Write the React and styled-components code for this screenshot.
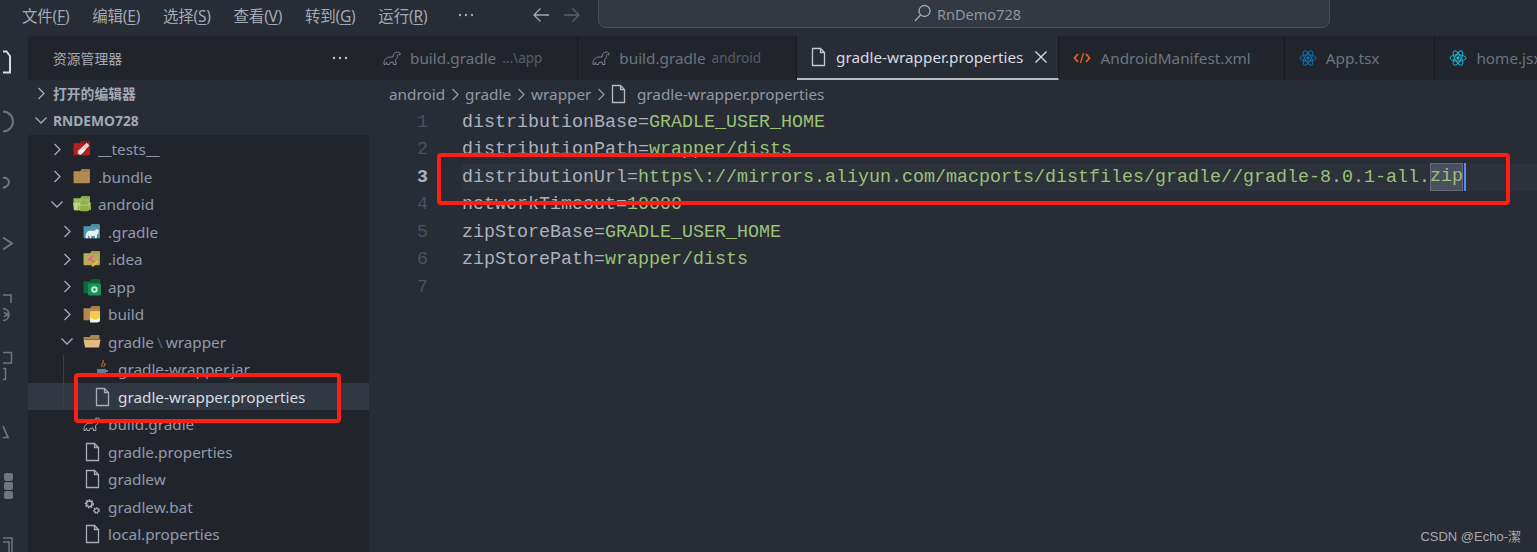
import React from "react";
import styled, { createGlobalStyle } from "styled-components";

const Global = createGlobalStyle`
  html, body { margin: 0; padding: 0; background: #282c34; }
  * { box-sizing: border-box; }
`;
const UI = `"Noto Sans", "Noto Sans CJK SC", sans-serif`;

const Page = styled.div`
  position: relative; width: 1537px; height: 552px; overflow: hidden;
  display: flex; flex-direction: column; background: #282c34;
  font-family: ${UI}; color: #9da5b4;
`;
const TitleBar = styled.header`
  height: 36px; flex: none; display: flex; align-items: flex-start; padding-left: 22px;
`;
const Menu = styled.nav`display: flex; gap: 22.8px; height: 30px; align-items: center; width: 409px; flex: none; color: #a3a9b5; white-space: nowrap;`;
const MenuItem = styled.span`
  font-size: 15.5px; letter-spacing: -0.2px;
  u { text-underline-offset: 2px; text-decoration-thickness: 1px; }
`;
const NavIcons = styled.div`display: flex; align-items: center; height: 30px; margin-left: 26px; width: 141px; flex: none;`;
const Dots = styled.svg`display: block; flex: none;`;
const Arrow = styled.svg`display: block; flex: none; margin-left: ${p => p.$ml}px;`;
const Search = styled.div`
  width: 732px; height: 29px; margin-top: -1px; background: #343841; border: 1px solid #4a4f59; border-radius: 0 0 8px 8px;
  display: flex; align-items: center; justify-content: center; gap: 5px; padding-left: 6px; font-size: 14.5px; color: #8f95a1;
`;
const Body = styled.div`flex: 1; display: flex; min-height: 0;`;
const Activity = styled.aside`width: 28px; flex: none; overflow: hidden; background: #282c34;`;
const Side = styled.section`width: 341px; flex: none; display: flex; flex-direction: column; background: #21252b;`;
const SideHeader = styled.div`
  height: 44px; flex: none; display: flex; align-items: center; justify-content: space-between;
  padding: 0 20px 0 25px; font-size: 13.8px; color: #a3a9b5;
`;
const Sections = styled.div`background: #282c34; height: 55px; flex: none;`;
const SectionRow = styled.div`
  height: 27.5px; display: flex; align-items: center; padding-left: ${p => p.$pad}px; gap: ${p => p.$gap}px;
  font-size: 13.8px; font-weight: 700; color: #a2a9b6; padding-bottom: 1px;
`;
const Tree = styled.div`flex: 1; padding-top: 0.7px; overflow: hidden;`;
const Row = styled.div`
  position: relative; height: 27.48px; display: flex; align-items: center;
  padding-left: ${p => 20 + p.$depth * 10}px;
  background: ${p => (p.$selected ? "#323842" : "transparent")};
  color: ${p => (p.$selected ? "#d7dae0" : "#8f9aab")};
  font-size: 15.3px; white-space: nowrap;
  ${p => p.$guide && `&::before { content: ""; position: absolute; left: 35px; top: 0; bottom: 0; width: 1px; background: #3b4048; }`}
`;
const Twist = styled.span`width: 18px; height: 18px; flex: none; display: flex; align-items: center; justify-content: center;`;
const IconSlot = styled.span`width: 18px; margin-left: 7px; margin-right: 7px; flex: none; display: flex; justify-content: center; align-items: center;`;
const Sep = styled.span`color: #5a6270; margin: 0 3px;`;
const Main = styled.main`flex: 1; min-width: 0; display: flex; flex-direction: column;`;
const Tabs = styled.div`height: 44px; flex: none; display: flex; background: #21252b; overflow: hidden;`;
const Tab = styled.div`
  height: 44px; flex: none; display: flex; align-items: center; padding: 0 ${p => (p.$active ? 9 : p.$end)}px 0 14px;
  border-right: 1px solid #181a1f; gap: ${p => (p.$active ? 10 : 9)}px; font-size: 15.3px; white-space: nowrap;
  background: ${p => (p.$active ? "#282c34" : "#21252b")};
  color: ${p => (p.$active ? "#d7dae0" : "#6d7480")};
  border-bottom: ${p => (p.$active ? "2px solid #b9bbbe" : "0")};
`;
const TabHint = styled.span`font-size: 13.5px; color: #565c67; margin-left: -3px;`;
const Close = styled.svg`display: block; margin-left: 0;`;
const Crumbs = styled.div`
  height: 28px; flex: none; display: flex; align-items: center; padding-left: 20px; font-size: 15.3px; color: #9199a6; white-space: nowrap; gap: 5.5px;
`;
const CrumbFile = styled.span`margin-left: 5px;`;
const Code = styled.div`
  flex: 1; padding-top: 0.5px; font-family: "Liberation Mono", monospace; font-size: 18.33px; color: #abb2bf;
`;
const Line = styled.div`height: 27.5px; display: flex; align-items: center;`;
const Gutter = styled.span`
  width: 93px; flex: none; padding-right: 34px; text-align: right; color: ${p => (p.$on ? "#abb2bf" : "#495162")};
  font-weight: ${p => (p.$on ? 700 : 400)};
`;
const Content = styled.span`
  flex: 1; height: 100%; display: flex; align-items: center; white-space: pre;
  background: ${p => (p.$on ? "#2c313a" : "transparent")};
`;
const Val = styled.span`color: #98c379;`;
const Sel = styled.span`
  color: #98c379; background: #4a4f5d; outline: 1px solid #666b78; outline-offset: -1px; height: 28px; line-height: 28px;
`;
const Caret = styled.span`width: 2px; height: 28px; background: #528bff; margin-left: 1px;`;
const Mark = styled.div`
  position: absolute; left: ${p => p.$x}px; top: ${p => p.$y}px; width: ${p => p.$w}px; height: ${p => p.$h}px;
  border: 4px solid #fb1f14; border-radius: 4px; pointer-events: none;
`;
const Watermark = styled.div`
  position: absolute; right: 16px; top: 526px; font-family: "Liberation Sans", "Noto Sans CJK SC", sans-serif;
  font-size: 13px; color: #a9a9a9;
`;

const Chev = ({ open, c = "#a6adba" }) => open
  ? <svg width="14" height="9" viewBox="0 0 14 9"><path d="M1.500 1.500 7 7l5.500-5.500" fill="none" stroke={c} strokeWidth="1.300" /></svg>
  : <svg width="9" height="13" viewBox="0 0 9 13"><path d="M1.500 1 7 6.500 1.500 12" fill="none" stroke={c} strokeWidth="1.300" /></svg>;

const Folder = ({ c, tab = c, children, open }) => (
  <svg width="20" height="18" viewBox="1.500 1.500 16.500 15.500">
    <path d="M2 4h6l1.500-2H16a1 1 0 0 1 1 1v11a1 1 0 0 1-1 1H3a1 1 0 0 1-1-1z" fill={c} />
    <path d="M10 2h6v2.500H9z" fill={tab} />
    {open && <path d="M1.500 8h16.500L16 15H3z" fill={open} />}
    {children}
  </svg>
);
const IconTests = () => <Folder c="#b3201f" tab="#8b1618"><path d="M14 3.500l2.500 2.500-7 7.500a2 2 0 0 1-3-2.800z" fill="#f7c9c9" /><path d="M8 10h5l-3.500 3.500a2 2 0 0 1-3-2.800z" fill="#fff" /></Folder>;
const IconBundle = () => <Folder c="#b08a50" tab="#a07b45" />;
const IconAndroid = () => <Folder c="#9dbb5c" tab="#8aa84f" open="#bcd48a"><path d="M8 10a4 4 0 0 1 8 0zM8 10.700h8v4.300a1 1 0 0 1-1 1H9a1 1 0 0 1-1-1zM6 10.700h1.300v4H6zM16.700 10.700H18v4h-1.300z" fill="#8cb146" /></Folder>;
const IconGradle = () => <Folder c="#4f98ab" tab="#4b8c9d"><path d="M4 15v-3a4 4 0 0 1 4-4h4l2-1.500 2 1-.5 3.500h-1l-.5 4h-1.500v-2H9v2H7.500v-2L6 12.500V15z" fill="#e8eff1" /></Folder>;
const IconIdea = () => <Folder c="#b5ad57" tab="#a19b4c"><path d="M11 6 7 9.500l5 2.500" fill="none" stroke="#ee5d92" strokeWidth="1.700" /><path d="M15 11l-5 5" stroke="#f4ba3d" strokeWidth="1.700" /></Folder>;
const IconApp = () => <Folder c="#0d6a3a" tab="#0b5a32"><rect x="6" y="6" width="12" height="11" rx="1" fill="#1d8f57" /><circle cx="12" cy="11.500" r="3" fill="#c7ecd8" /><circle cx="12" cy="11.500" r="1.200" fill="#1d8f57" /></Folder>;
const IconBuild = () => <Folder c="#b08a50" tab="#a07b45"><path d="M8 7h9v9l-2 1H8z" fill="#f2f2ee" /><path d="M8 7h9v3a4.500 4.500 0 0 1-9 0z" fill="#f7cb42" /></Folder>;
const IconOpen = () => (
  <svg width="20" height="18" viewBox="0.500 1.500 18 15">
    <path d="M1 4h6l1.500-2H16a1 1 0 0 1 1 1v3H1z" fill="#a98856" /><path d="M1 6.500h17l-1.500 8H2.500z" fill="#e0bd82" />
  </svg>
);
const IconJava = () => (
  <svg width="17" height="20" viewBox="0 0 17 20">
    <path d="M9 1c2 3-3 4-1 7M11 4c1 2-2 3-1 4" fill="none" stroke="#c8692a" strokeWidth="1.200" />
    <path d="M3 10h9v2.500a3 3 0 0 1-3 3H6a3 3 0 0 1-3-3zM12 11h2v2h-2zM2 16.500h11v1H2z" fill="#5c7f9c" />
  </svg>
);
const FileIcon = ({ c = "#a7adb7" }) => (
  <svg width="15" height="20" viewBox="0 0 15 19"><path d="M1.500 1H9.500L13.500 5V18H1.500z M9.500 1V5H13.500" fill="none" stroke={c} strokeWidth="1.300" /></svg>
);
const Elephant = ({ c = "#7b818c" }) => (
  <svg width="18" height="15" viewBox="0 0 18 15">
    <path d="M1 13.500c-.5-4 2-7.500 6-7.500h3c0-3 2-5 4.500-5 2 0 3 1.500 2.500 3l-1.500-.5-1.500 1 .5 2c-.5 1-1 1.500-2 2l.5 5h-2.500l-.5-2.500-3 .5-.5 2H4l-.500-2.500L2.500 13.500z" fill="none" stroke={c} strokeWidth="1" />
  </svg>
);
const Gears = () => (
  <svg width="20" height="19" viewBox="0 0 20 19">
    <circle cx="7" cy="6.500" r="3.800" fill="none" stroke="#a7adb7" strokeWidth="2.600" strokeDasharray="1.800 1" />
    <circle cx="7" cy="6.500" r="3" fill="none" stroke="#a7adb7" strokeWidth="1.300" />
    <circle cx="15" cy="14" r="2.700" fill="none" stroke="#a7adb7" strokeWidth="2.200" strokeDasharray="1.500 .9" />
    <circle cx="15" cy="14" r="2.200" fill="none" stroke="#a7adb7" strokeWidth="1" />
  </svg>
);
const CodeIcon = () => (
  <svg width="18" height="14" viewBox="0 0 18 14"><path d="M5 3 1.500 7 5 11M13 3l3.500 4L13 11" fill="none" stroke="#e8602c" strokeWidth="1.800" /><path d="M10.500 2 7.500 12" stroke="#e8602c" strokeWidth="1.300" /></svg>
);
const Atom = ({ c }) => (
  <svg width="18" height="18" viewBox="0 0 18 18">
    <g fill="none" stroke={c} strokeWidth="1">
      <ellipse cx="9" cy="9" rx="8" ry="3.200" />
      <ellipse cx="9" cy="9" rx="8" ry="3.200" transform="rotate(60 9 9)" />
      <ellipse cx="9" cy="9" rx="8" ry="3.200" transform="rotate(120 9 9)" />
    </g>
    <circle cx="9" cy="9" r="1.700" fill={c} />
  </svg>
);

/* Icons of the activity bar, cut off at x = 3 as in the reference; coordinates are from the bar's top. */
const ActivityIcons = () => (
  <svg width="28" height="516" viewBox="0 0 28 516" fill="none" stroke="#6f747e" strokeWidth="2">
    <path d="M3 15.500h3.500L10 20v16.500H3" stroke="#d7dae0" />
    <path d="M3 75.500a10 10 0 0 1 0 20" />
    <path d="M3 142a4.500 4.500 0 0 1 6 4c0 3-3 5-6 6" />
    <path d="M3 201.500l9 6-9 6" />
    <path d="M3 259h8v8M3 272.500a6 6 0 1 1 0 12M4 276l5 5M9 276l-5 5" strokeWidth="1.500" />
    <path d="M3 316.500h8.500v10.500H3M3 332.500h2.500v11H3" strokeWidth="1.500" />
    <path d="M3 390l5 11.500H3" strokeWidth="1.700" />
    <rect x="4" y="437" width="9" height="8" rx="2" fill="#6f747e" stroke="none" />
    <rect x="4" y="446" width="9" height="8" rx="2" fill="#6f747e" stroke="none" />
    <rect x="4" y="455" width="9" height="8" rx="2" fill="#6f747e" stroke="none" />
    <path d="M3 502h9v14M3 506h6v10" strokeWidth="1.500" />
  </svg>
);

const tree = [
  { d: 0, t: "__tests__", i: <IconTests /> },
  { d: 0, t: ".bundle", i: <IconBundle /> },
  { d: 0, t: "android", i: <IconAndroid />, open: true },
  { d: 1, t: ".gradle", i: <IconGradle /> },
  { d: 1, t: ".idea", i: <IconIdea /> },
  { d: 1, t: "app", i: <IconApp /> },
  { d: 1, t: "build", i: <IconBuild /> },
  { d: 1, t: <>gradle<Sep>\</Sep>wrapper</>, i: <IconOpen />, open: true },
  { d: 2, t: "gradle-wrapper.jar", i: <IconJava />, leaf: true, guide: true },
  { d: 2, t: "gradle-wrapper.properties", i: <FileIcon />, leaf: true, guide: true, sel: true },
  { d: 1, t: "build.gradle", i: <Elephant c="#a7adb7" />, leaf: true },
  { d: 1, t: "gradle.properties", i: <FileIcon />, leaf: true },
  { d: 1, t: "gradlew", i: <FileIcon />, leaf: true },
  { d: 1, t: "gradlew.bat", i: <Gears />, leaf: true },
  { d: 1, t: "local.properties", i: <FileIcon />, leaf: true },
];

const lines = [
  ["distributionBase=", "GRADLE_USER_HOME"],
  ["distributionPath=", "wrapper/dists"],
  ["distributionUrl=", "https\\://mirrors.aliyun.com/macports/distfiles/gradle//gradle-8.0.1-all."],
  ["networkTimeout=", "10000"],
  ["zipStoreBase=", "GRADLE_USER_HOME"],
  ["zipStorePath=", "wrapper/dists"],
  ["", ""],
];

const menus = [["文件", "F"], ["编辑", "E"], ["选择", "S"], ["查看", "V"], ["转到", "G"], ["运行", "R"]];

export default function App() {
  return (
    <Page>
      <Global />
      <TitleBar>
        <Menu>
          {menus.map(([a, k]) => <MenuItem key={k}>{a}(<u>{k}</u>)</MenuItem>)}
        </Menu>
        <NavIcons>
          <Dots width="18" height="4" viewBox="0 0 18 4" fill="#a3a9b5"><circle cx="3" cy="2" r="1.200" /><circle cx="9" cy="2" r="1.200" /><circle cx="15" cy="2" r="1.200" /></Dots>
          <Arrow $ml={57} width="18" height="16" viewBox="0 0 18 16" fill="none" stroke="#a3a9b5" strokeWidth="1.300"><path d="M17 8H2M8.500 1.500 2 8l6.500 6.500" /></Arrow>
          <Arrow $ml={13} width="18" height="16" viewBox="0 0 18 16" fill="none" stroke="#5b606b" strokeWidth="1.300"><path d="M1 8h15M9.500 1.500 16 8l-6.500 6.500" /></Arrow>
        </NavIcons>
        <Search>
          <svg width="19" height="19" viewBox="0 0 19 19" fill="none" stroke="#a3a9b5" strokeWidth="1.300"><circle cx="11.500" cy="7" r="5.500" /><path d="M7.500 11 2 17" /></svg>
          <span>RnDemo728</span>
        </Search>
      </TitleBar>
      <Body>
        <Activity><ActivityIcons /></Activity>
        <Side>
          <SideHeader>
            <span>资源管理器</span>
            <Dots width="18" height="4" viewBox="0 0 18 4" fill="#c4c8d0"><circle cx="3" cy="2" r="1.200" /><circle cx="9" cy="2" r="1.200" /><circle cx="15" cy="2" r="1.200" /></Dots>
          </SideHeader>
          <Sections>
            <SectionRow $pad={9} $gap={7}><Chev />打开的编辑器</SectionRow>
            <SectionRow $pad={6} $gap={5}><Chev open />RNDEMO728</SectionRow>
          </Sections>
          <Tree>
            {tree.map((r, i) => (
              <Row key={i} $depth={r.d} $selected={r.sel} $guide={r.guide}>
                <Twist>{!r.leaf && <Chev open={r.open} />}</Twist>
                <IconSlot>{r.i}</IconSlot>
                <span>{r.t}</span>
              </Row>
            ))}
          </Tree>
        </Side>
        <Main>
          <Tabs>
            <Tab $end={35}><Elephant /><span>build.gradle</span><TabHint>...\app</TabHint></Tab>
            <Tab $end={35}><Elephant /><span>build.gradle</span><TabHint>android</TabHint></Tab>
            <Tab $active><FileIcon c="#c3c7ce" /><span>gradle-wrapper.properties</span>
              <Close width="16" height="16" viewBox="0 0 16 16" stroke="#d7dae0" strokeWidth="1.400"><path d="M2.500 2.500l11 11M13.500 2.500l-11 11" /></Close>
            </Tab>
            <Tab $end={33}><CodeIcon /><span>AndroidManifest.xml</span></Tab>
            <Tab $end={55}><Atom c="#0b73b8" /><span>App.tsx</span></Tab>
            <Tab $end={36}><Atom c="#14b8d8" /><span>home.jsx</span></Tab>
          </Tabs>
          <Crumbs>
            <span>android</span><Chev c="#9199a6" /><span>gradle</span><Chev c="#9199a6" /><span>wrapper</span><Chev c="#9199a6" /><FileIcon c="#b5bac3" /><CrumbFile>gradle-wrapper.properties</CrumbFile>
          </Crumbs>
          <Code>
            {lines.map(([k, v], i) => (
              <Line key={i}>
                <Gutter $on={i === 2}>{i + 1}</Gutter>
                <Content $on={i === 2}>
                  {k}<Val>{v}</Val>{i === 2 && <><Sel>zip</Sel><Caret /></>}
                </Content>
              </Line>
            ))}
          </Code>
        </Main>
      </Body>
      <Mark $x={74} $y={373} $w={267} $h={50} />
      <Mark $x={437} $y={153} $w={1073} $h={52} />
      <Watermark>CSDN @Echo-潔</Watermark>
    </Page>
  );
}
